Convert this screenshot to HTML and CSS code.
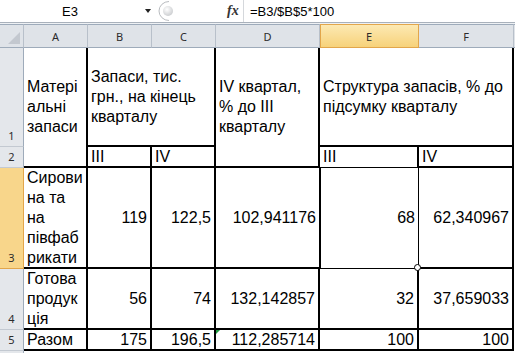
FILE: index.html
```html
<!DOCTYPE html>
<html lang="uk">
	<head>
		<meta charset="UTF-8" />
		<meta name="viewport" content="width=device-width, initial-scale=1.0" />
		<title>Запаси</title>
		<link rel="stylesheet" href="styles.css">
	</head>

	<body>
		<!-- Рядок формул -->
		<div class="formula-bar">
			<div class="name-box">E3</div>
			<span class="arrow"></span>
			<svg class="grip" width="24" height="22" viewBox="0 0 24 22">
				<defs>
					<radialGradient id="dot" cx="0.4" cy="0.35" r="0.7">
						<stop offset="0" stop-color="#ffffff" />
						<stop offset="1" stop-color="#c9cbce" />
					</radialGradient>
				</defs>
				<path d="M12 1.5 A 10 9.5 0 0 0 12 20.5" fill="none" stroke="#b9bcc0" stroke-width="1" />
				<circle cx="11" cy="11" r="5" fill="url(#dot)" />
			</svg>
			<span class="fx">fx</span>
			<div class="formula">=B3/$B$5*100</div>
		</div>
		<div class="strip"></div>

		<div class="sheet">
			<!-- заголовки стовпців -->
			<div class="corner">
				<svg width="12" height="12" viewBox="0 0 12 12"><polygon points="12,0 12,12 0,12" fill="#c3c8cf" /></svg>
			</div>
			<div class="col-head">A</div>
			<div class="col-head">B</div>
			<div class="col-head">C</div>
			<div class="col-head">D</div>
			<div class="col-head sel">E</div>
			<div class="col-head">F</div>
			<div class="col-head tail"></div>

			<!-- рядок 1 -->
			<div class="row-head">1</div>
			<div class="c span-r"><span>Матері<br>альні<br>запаси</span></div>
			<div class="c span-c"><span>Запаси, тис.<br>грн., на кінець<br>кварталу</span></div>
			<div class="c span-r"><span>IV квартал,<br>% до ІІІ<br>кварталу</span></div>
			<div class="c span-c"><span>Структура запасів, % до<br>підсумку кварталу</span></div>
			<div class="tail"></div>

			<!-- рядок 2 -->
			<div class="row-head">2</div>
			<div class="c"><span>ІІІ</span></div>
			<div class="c"><span>IV</span></div>
			<div class="c thin-b"><span>ІІІ</span></div>
			<div class="c"><span>IV</span></div>
			<div class="tail"></div>

			<!-- рядок 3 -->
			<div class="row-head sel">3</div>
			<div class="c"><span>Сирови<br>на та<br>на<br>півфаб<br>рикати</span></div>
			<div class="c num"><span>119</span></div>
			<div class="c num"><span>122,5</span></div>
			<div class="c num thin-r"><span>102,941176</span></div>
			<div class="c num thin-r thin-b active"><span>68</span><i class="handle"></i></div>
			<div class="c num"><span>62,340967</span></div>
			<div class="tail"></div>

			<!-- рядок 4 -->
			<div class="row-head">4</div>
			<div class="c"><span>Готова<br>продук<br>ція</span></div>
			<div class="c num"><span>56</span></div>
			<div class="c num"><span>74</span></div>
			<div class="c num"><span>132,142857</span></div>
			<div class="c num"><span>32</span></div>
			<div class="c num"><span>37,659033</span></div>
			<div class="tail"></div>

			<!-- рядок 5 -->
			<div class="row-head">5</div>
			<div class="c"><span>Разом</span></div>
			<div class="c num"><span>175</span></div>
			<div class="c num"><span>196,5</span></div>
			<div class="c num flagged"><i class="flag"></i><span>112,285714</span></div>
			<div class="c num"><span>100</span></div>
			<div class="c num"><span>100</span></div>
			<div class="tail"></div>

			<!-- рядок 6 (обрізаний) -->
			<div class="row-head"></div>
			<div class="rest"></div>
		</div>
	</body>
</html>
```

FILE: styles.css
```css
    body {
      margin: 0;
      width: 515px;
      height: 353px;
      overflow: hidden;
      background: #fff;
      font-family: "Liberation Sans", Arial, sans-serif;
      color: #000;
    }
    .formula-bar {
      display: flex;
      align-items: center;
      height: 22px;
      border-bottom: 1px solid #a9b1bb;
      background: #fff;
    }
    .name-box {
      width: 140px;
      text-align: center;
      font-size: 13px;
    }
    .arrow {
      width: 0;
      height: 0;
      margin-left: 5px;
      border-left: 3px solid transparent;
      border-right: 3px solid transparent;
      border-top: 4px solid #222;
    }
    .grip {
      margin-left: 6px;
    }
    .fx {
      margin-left: 46px;
      width: 14px;
      font-family: "Liberation Serif", serif;
      font-style: italic;
      font-weight: bold;
      font-size: 14px;
      color: #333;
    }
    .formula {
      flex: 1;
      align-self: stretch;
      display: flex;
      align-items: center;
      margin-left: 2px;
      padding-left: 6px;
      border-left: 1px solid #d5d8dc;
      font-size: 13px;
    }
    .strip {
      height: 1px;
      background: #eef1f4;
    }

    .sheet {
      display: grid;
      grid-template-columns: 24px 64px 64px 64px 104px 99px 95px 1fr;
      grid-template-rows: 24px 99px 21px 101px 61px 21px 1fr;
      height: 329px;
    }
    .sheet > * {
      box-sizing: border-box;
      min-width: 0;
    }
    .corner,
    .col-head {
      background: #dfe3e8;
      border-top: 1px solid #9eabba;
      border-bottom: 1px solid #9eabba;
      border-right: 1px solid #b8c0ca;
    }
    .corner {
      display: flex;
      align-items: flex-end;
      justify-content: flex-end;
      padding: 0 3px 3px 0;
    }
    .col-head {
      display: flex;
      align-items: center;
      justify-content: center;
      font-family: "Noto Sans", sans-serif;
      font-size: 11px;
      color: #2b2b2b;
    }
    .col-head.tail {
      border-right: none;
    }
    .col-head.sel {
      background: linear-gradient(#fce9b3, #f7d27a);
      border-color: #e2a64b;
      box-shadow: inset 1px 0 0 #e2a64b;
    }
    .row-head {
      background: #e4e7eb;
      border-right: 1px solid #9eabba;
      border-bottom: 1px solid #c3c9d1;
      display: flex;
      align-items: flex-end;
      justify-content: center;
      padding-bottom: 3px;
      font-family: "Noto Sans", sans-serif;
      font-size: 11px;
      line-height: 14px;
      color: #2b2b2b;
    }
    .row-head.sel {
      background: #f8d68b;
      border-bottom-color: #e2a64b;
      border-right-color: #e2a64b;
    }

    .c {
      display: flex;
      align-items: center;
      padding: 0 3px;
      border-right: 2px solid #000;
      border-bottom: 2px solid #000;
      font-size: 16px;
      line-height: 20px;
      white-space: nowrap;
    }
    .num {
      justify-content: flex-end;
    }
    .span-r {
      grid-row: span 2;
    }
    .span-c {
      grid-column: span 2;
    }
    .thin-r {
      border-right-width: 1px;
    }
    .thin-b {
      border-bottom-width: 1px;
    }
    .active {
      position: relative;
      border-left: 1px solid #000;
      padding-left: 2px;
    }
    .handle {
      position: absolute;
      right: -3px;
      bottom: -3px;
      width: 5px;
      height: 5px;
      border: 1px solid #000;
      border-radius: 50%;
      background: #fff;
      z-index: 2;
    }
    .flagged {
      position: relative;
    }
    .flag {
      position: absolute;
      top: 0;
      left: 0;
      width: 0;
      height: 0;
      border-top: 4px solid #1f9b3f;
      border-right: 4px solid transparent;
    }
    .rest {
      grid-column: span 7;
    }
```
